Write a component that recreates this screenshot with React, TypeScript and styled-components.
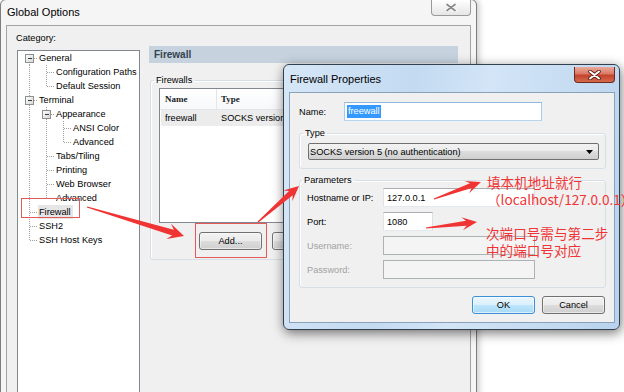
import React from 'react';
import styled, { createGlobalStyle } from 'styled-components';

const GlobalStyle = createGlobalStyle`
  html, body {
    margin: 0;
    padding: 0;
    background: #fff;
  }
  body {
    font-family: "Liberation Sans", Arial, sans-serif;
    font-size: 9.2px;
    color: #000;
  }
  * {
    box-sizing: border-box;
  }
`;

const RED = '#f03434';

const Desktop = styled.div`
  position: relative;
  width: 624px;
  height: 392px;
  overflow: hidden;
  background: #fff;
`;

/* ---------- Global Options window ---------- */

const OptionsWindow = styled.div`
  position: absolute;
  left: 0;
  top: -1px;
  width: 477px;
  height: 420px;
  display: flex;
  flex-direction: column;
  padding: 0 5px;
  background: #f5f5f5;
  border: 1px solid #7d7d7d;
  border-radius: 6px 6px 0 0;
  box-shadow: 2px 0 6px rgba(0, 0, 0, 0.22);
`;

const TitleBar = styled.div<{ $height: number }>`
  display: flex;
  align-items: flex-start;
  height: ${({ $height }) => $height}px;
  flex-shrink: 0;
`;

const WindowTitle = styled.div<{ $top: number }>`
  margin-top: ${({ $top }) => $top}px;
  padding-left: 1px;
  font-size: 11px;
  line-height: 12px;
  color: #000;
`;

const CloseButton = styled.div<{ $danger?: boolean }>`
  margin-left: auto;
  margin-top: ${({ $danger }) => ($danger ? 2 : 0)}px;
  width: ${({ $danger }) => ($danger ? 41 : 40)}px;
  height: 16px;
  display: flex;
  align-items: center;
  justify-content: center;
  border: 1px solid ${({ $danger }) => ($danger ? '#6d2a22' : '#9a9a9a')};
  border-top: none;
  border-radius: 0 0 4px 4px;
  background: ${({ $danger }) =>
    $danger
      ? 'linear-gradient(#e9a99b 0%, #dc7a66 45%, #c3442c 55%, #d36a4d 100%)'
      : 'linear-gradient(#ffffff 0%, #f2f2f2 50%, #e6e6e6 100%)'};
`;

const ClientArea = styled.div`
  flex: 1;
  display: flex;
  gap: 9px;
  padding: 6px 12px 0 10px;
  background: #f0f0f0;
  border: 1px solid #a3a3a3;
  border-bottom: none;
`;

const CategoryColumn = styled.div`
  width: 123px;
  display: flex;
  flex-direction: column;
`;

const CategoryLabel = styled.div`
  height: 18px;
  margin-left: -1px;
  line-height: 12px;
`;

const TreeBox = styled.div`
  flex: 1;
  padding: 0 0 0 3px;
  background: #fff;
  border: 1px solid #828790;
`;

const TreeRow = styled.div`
  display: flex;
  height: 14px;
  align-items: center;
  white-space: nowrap;
`;

const TreeLabel = styled.span<{ $selected?: boolean }>`
  padding: 0 2px 0 1px;
  line-height: 14px;
  background: ${({ $selected }) => ($selected ? '#e6e6e6' : 'transparent')};
`;

const PagePanel = styled.div`
  flex: 1;
  display: flex;
  flex-direction: column;
  padding-top: 14px;
`;

const PageHeader = styled.div`
  height: 17px;
  padding-left: 5px;
  background: #c6d2de;
  color: #33424f;
  font-size: 10px;
  font-weight: bold;
  line-height: 17px;
`;

const GroupBox = styled.fieldset<{ $pad: string; $margin: string }>`
  margin: ${({ $margin }) => $margin};
  padding: ${({ $pad }) => $pad};
  min-width: 0;
  border: 1px solid #d5dfe5;
  border-radius: 3px;
  box-shadow: inset 1px 1px 0 #fff;
`;

const GroupLegend = styled.legend`
  margin-left: -5px;
  padding: 0 2px;
  font-size: 9.2px;
  line-height: 12px;
`;

const ListBox = styled.div`
  height: 135px;
  background: #fff;
  border: 1px solid #828790;
  overflow: hidden;
`;

const ListHeader = styled.div`
  display: flex;
  height: 21px;
  border-bottom: 1px solid #e5e5e5;
  background: linear-gradient(#ffffff, #f7f8fa);
`;

const HeaderCell = styled.div<{ $width?: number }>`
  width: ${({ $width }) => ($width ? `${$width}px` : 'auto')};
  flex: ${({ $width }) => ($width ? 'none' : '1')};
  padding-left: ${({ $width }) => ($width ? 5 : 4)}px;
  border-right: ${({ $width }) => ($width ? '1px solid #e5e5e5' : 'none')};
  font-family: "Liberation Serif", "Times New Roman", serif;
  font-size: 9px;
  font-weight: bold;
  line-height: 20px;
  color: #222;
`;

const ListRow = styled.div<{ $selected?: boolean }>`
  display: flex;
  height: 16px;
  margin: 0 1px;
  line-height: 16px;
  background: ${({ $selected }) => ($selected ? '#ececec' : 'transparent')};
  white-space: nowrap;
`;

const ListCell = styled.div<{ $width?: number }>`
  width: ${({ $width }) => ($width ? `${$width}px` : 'auto')};
  padding-left: 4px;
`;

const ButtonRow = styled.div<{ $align: 'start' | 'end'; $top: number; $inset: number }>`
  display: flex;
  justify-content: ${({ $align }) => ($align === 'start' ? 'flex-start' : 'flex-end')};
  gap: ${({ $align }) => ($align === 'start' ? 10 : 7)}px;
  margin-top: ${({ $top }) => $top}px;
  padding-left: ${({ $align, $inset }) => ($align === 'start' ? $inset : 0)}px;
  padding-right: ${({ $align, $inset }) => ($align === 'end' ? $inset : 0)}px;
`;

const PushButton = styled.div<{ $default?: boolean }>`
  width: 63px;
  height: 18px;
  display: flex;
  align-items: center;
  justify-content: center;
  border: 1px solid ${({ $default }) => ($default ? '#3c8fd8' : '#707070')};
  border-radius: 3px;
  background: ${({ $default }) =>
    $default
      ? 'linear-gradient(#eaf6fd 0%, #d9f0fc 50%, #bee6fd 50%, #a7d9f5 100%)'
      : 'linear-gradient(#f2f2f2 0%, #ebebeb 50%, #dddddd 50%, #cfcfcf 100%)'};
  box-shadow: inset 0 0 0 1px ${({ $default }) => ($default ? 'rgba(255,255,255,0.6)' : 'rgba(255,255,255,0.5)')};
  font-size: 9.2px;
`;

/* ---------- Firewall Properties dialog ---------- */

const Dialog = styled.div`
  position: absolute;
  left: 283px;
  top: 64px;
  width: 337px;
  height: 266px;
  display: flex;
  flex-direction: column;
  padding: 0 4px 6px 5px;
  border: 1px solid #33414f;
  border-radius: 6px;
  background: linear-gradient(100deg, #d6e7f7 0%, #c3daf1 35%, #d3e5f7 55%, #b9d3ed 100%);
  box-shadow: 1px 3px 12px rgba(0, 0, 0, 0.55);
`;

const DialogClient = styled.div`
  flex: 1;
  display: flex;
  flex-direction: column;
  padding: 9px 8px 0 9px;
  background: #f0f0f0;
  border: 1px solid #8aa1ba;
`;

const FieldRow = styled.div<{ $labelWidth: number }>`
  display: grid;
  grid-template-columns: ${({ $labelWidth }) => $labelWidth}px auto;
  align-items: center;
  height: 19px;
  line-height: 12px;
`;

const FieldLabel = styled.span<{ $disabled?: boolean }>`
  color: ${({ $disabled }) => ($disabled ? '#a2a2a2' : '#000')};
  white-space: nowrap;
`;

const TextBox = styled.div<{ $width: number; $state?: 'focus' | 'disabled' }>`
  width: ${({ $width }) => $width}px;
  height: 19px;
  padding-left: ${({ $state }) => ($state === 'focus' ? 2 : 3)}px;
  display: flex;
  align-items: center;
  border: 1px solid;
  border-color: ${({ $state }) =>
    $state === 'focus'
      ? '#8fb7dd #a9cbe8 #b7d6ef #a9cbe8'
      : $state === 'disabled'
        ? '#adb2b5'
        : '#abadb3 #dbdfe6 #e3e9ef #e2e3ea'};
  background: ${({ $state }) => ($state === 'disabled' ? '#f4f4f4' : '#fff')};
  font-size: 9.2px;
`;

const SelectedText = styled.span`
  padding: 0 1px;
  background: #3399ff;
  color: #fff;
  line-height: 13px;
`;

const ComboBox = styled.div`
  height: 17px;
  display: flex;
  align-items: center;
  justify-content: space-between;
  padding: 0 5px 0 1px;
  border: 1px solid #707070;
  border-radius: 2px;
  background: linear-gradient(#f2f2f2 0%, #ebebeb 50%, #dddddd 50%, #cfcfcf 100%);
  font-size: 9.2px;
`;

const ParamList = styled.div`
  display: flex;
  flex-direction: column;
  gap: 5px;
`;

/* ---------- annotations ---------- */

const Markup = styled.svg`
  position: absolute;
  left: 0;
  top: 0;
  pointer-events: none;
`;

const Note = styled.div<{ $left: number; $top: number }>`
  position: absolute;
  left: ${({ $left }) => $left}px;
  top: ${({ $top }) => $top}px;
  color: ${RED};
  font-family: "Noto Sans CJK SC", sans-serif;
  font-size: 13.6px;
  line-height: 17px;
  white-space: nowrap;
`;

/* ---------- drawings ---------- */

type TreeItem = { label: string; depth: number; box?: boolean; selected?: boolean };

const treeItems: TreeItem[] = [
  { label: 'General', depth: 0, box: true },
  { label: 'Configuration Paths', depth: 1 },
  { label: 'Default Session', depth: 1 },
  { label: 'Terminal', depth: 0, box: true },
  { label: 'Appearance', depth: 1, box: true },
  { label: 'ANSI Color', depth: 2 },
  { label: 'Advanced', depth: 2 },
  { label: 'Tabs/Tiling', depth: 1 },
  { label: 'Printing', depth: 1 },
  { label: 'Web Browser', depth: 1 },
  { label: 'Advanced', depth: 1 },
  { label: 'Firewall', depth: 0, selected: true },
  { label: 'SSH2', depth: 0 },
  { label: 'SSH Host Keys', depth: 0 },
];

const continuesAt = (i: number, d: number) => {
  for (let j = i + 1; j < treeItems.length; j++) {
    if (treeItems[j].depth < d) return false;
    if (treeItems[j].depth === d) return true;
  }
  return false;
};

const DOT = { stroke: '#a0a0a0', strokeWidth: 1, strokeDasharray: '1 1', shapeRendering: 'crispEdges' as const };

const Guide = ({ on }: { on: boolean }) => (
  <svg width={17} height={14} style={{ flex: 'none' }}>
    {on && <line x1={8.5} y1={0} x2={8.5} y2={14} {...DOT} />}
  </svg>
);

const Connector = ({ first, last, box }: { first: boolean; last: boolean; box?: boolean }) => (
  <svg width={17} height={14} style={{ flex: 'none' }}>
    <defs>
      <linearGradient id="expander" x1="0" y1="0" x2="1" y2="1">
        <stop offset="0" stopColor="#ffffff" />
        <stop offset="1" stopColor="#d4d4d4" />
      </linearGradient>
    </defs>
    <line x1={8.5} y1={first ? 7 : 0} x2={8.5} y2={last ? 8 : 14} {...DOT} />
    <line x1={9} y1={7.5} x2={17} y2={7.5} {...DOT} />
    {box && (
      <>
        <rect x={4.5} y={3.5} width={8} height={8} fill="url(#expander)" stroke="#8e8f8f" />
        <line x1={6.5} y1={7.5} x2={10.5} y2={7.5} stroke="#3b3b3b" shapeRendering="crispEdges" />
      </>
    )}
  </svg>
);

const CrossGlyph = ({ danger }: { danger?: boolean }) =>
  danger ? (
    <svg width={13} height={10} viewBox="0 0 13 10">
      <path d="M2 1.5 L11 8.5 M11 1.5 L2 8.5" stroke="#5a1c14" strokeWidth={3.6} strokeLinecap="round" />
      <path d="M2 1.5 L11 8.5 M11 1.5 L2 8.5" stroke="#fff" strokeWidth={2} strokeLinecap="round" />
    </svg>
  ) : (
    <svg width={12} height={9} viewBox="0 0 12 9">
      <path d="M2 1.5 L10 7.5 M10 1.5 L2 7.5" stroke="#ffffff" strokeWidth={3.4} strokeLinecap="round" />
      <path d="M2 1.5 L10 7.5 M10 1.5 L2 7.5" stroke="#8a8a8a" strokeWidth={1.8} strokeLinecap="round" />
    </svg>
  );

const arrowPoints = (x1: number, y1: number, x2: number, y2: number, head: number, headW: number, bodyW: number) => {
  const L = Math.hypot(x2 - x1, y2 - y1);
  const ux = (x2 - x1) / L;
  const uy = (y2 - y1) / L;
  const nx = -uy;
  const ny = ux;
  const bx = x2 - ux * head;
  const by = y2 - uy * head;
  const kx = x2 - ux * head * 0.72;
  const ky = y2 - uy * head * 0.72;
  const pts = [
    [x1 + nx * 0.6, y1 + ny * 0.6],
    [kx + nx * bodyW, ky + ny * bodyW],
    [bx + nx * headW, by + ny * headW],
    [x2, y2],
    [bx - nx * headW, by - ny * headW],
    [kx - nx * bodyW, ky - ny * bodyW],
    [x1 - nx * 0.6, y1 - ny * 0.6],
  ];
  return pts.map(([x, y]) => `${x.toFixed(1)},${y.toFixed(1)}`).join(' ');
};

const arrows = [
  { from: [87, 207], to: [184, 236], head: 16, headW: 8, bodyW: 3 },
  { from: [258, 222], to: [299, 186], head: 15, headW: 7, bodyW: 2.8 },
  { from: [434, 199], to: [481, 182], head: 15, headW: 6.5, bodyW: 2.6 },
  { from: [426, 228], to: [477, 222], head: 15, headW: 6.5, bodyW: 2.6 },
];

export default function App() {
  return (
    <>
      <GlobalStyle />
      <Desktop>
        <OptionsWindow>
          <TitleBar $height={25}>
            <WindowTitle $top={6}>Global Options</WindowTitle>
            <CloseButton>
              <CrossGlyph />
            </CloseButton>
          </TitleBar>
          <ClientArea>
            <CategoryColumn>
              <CategoryLabel>Category:</CategoryLabel>
              <TreeBox>
                {treeItems.map((item, i) => (
                  <TreeRow key={i}>
                    {Array.from({ length: item.depth }, (_, d) => (
                      <Guide key={d} on={continuesAt(i, d)} />
                    ))}
                    <Connector first={i === 0} last={!continuesAt(i, item.depth)} box={item.box} />
                    <TreeLabel $selected={item.selected}>{item.label}</TreeLabel>
                  </TreeRow>
                ))}
              </TreeBox>
            </CategoryColumn>
            <PagePanel>
              <PageHeader>Firewall</PageHeader>
              <GroupBox $margin="11px 5px 0 1px" $pad="2px 8px 9px 8px">
                <GroupLegend>Firewalls</GroupLegend>
                <ListBox>
                  <ListHeader>
                    <HeaderCell $width={57}>Name</HeaderCell>
                    <HeaderCell>Type</HeaderCell>
                  </ListHeader>
                  <ListRow $selected>
                    <ListCell $width={56}>freewall</ListCell>
                    <ListCell>SOCKS version 5 (no authentication)</ListCell>
                  </ListRow>
                </ListBox>
                <ButtonRow $align="start" $top={9} $inset={40}>
                  <PushButton>Add...</PushButton>
                  <PushButton>Edit...</PushButton>
                  <PushButton>Remove...</PushButton>
                </ButtonRow>
              </GroupBox>
            </PagePanel>
          </ClientArea>
        </OptionsWindow>

        <Dialog>
          <TitleBar $height={27}>
            <WindowTitle $top={8}>Firewall Properties</WindowTitle>
            <CloseButton $danger>
              <CrossGlyph danger />
            </CloseButton>
          </TitleBar>
          <DialogClient>
            <FieldRow $labelWidth={45}>
              <FieldLabel>Name:</FieldLabel>
              <TextBox $width={198} $state="focus">
                <SelectedText>freewall</SelectedText>
              </TextBox>
            </FieldRow>
            <GroupBox $margin="6px 0 0 0" $pad="4px 6px 8px 8px">
              <GroupLegend>Type</GroupLegend>
              <ComboBox>
                <span>SOCKS version 5 (no authentication)</span>
                <svg width={7} height={4} viewBox="0 0 7 4">
                  <path d="M0 0 H7 L3.5 4 Z" fill="#000" />
                </svg>
              </ComboBox>
            </GroupBox>
            <GroupBox $margin="5px 0 0 0" $pad="2px 6px 8px 7px">
              <GroupLegend>Parameters</GroupLegend>
              <ParamList>
                <FieldRow $labelWidth={76}>
                  <FieldLabel>Hostname or IP:</FieldLabel>
                  <TextBox $width={152}>127.0.0.1</TextBox>
                </FieldRow>
                <FieldRow $labelWidth={76}>
                  <FieldLabel>Port:</FieldLabel>
                  <TextBox $width={50}>1080</TextBox>
                </FieldRow>
                <FieldRow $labelWidth={76}>
                  <FieldLabel $disabled>Username:</FieldLabel>
                  <TextBox $width={152} $state="disabled" />
                </FieldRow>
                <FieldRow $labelWidth={76}>
                  <FieldLabel $disabled>Password:</FieldLabel>
                  <TextBox $width={152} $state="disabled" />
                </FieldRow>
              </ParamList>
            </GroupBox>
            <ButtonRow $align="end" $top={8} $inset={1}>
              <PushButton $default>OK</PushButton>
              <PushButton>Cancel</PushButton>
            </ButtonRow>
          </DialogClient>
        </Dialog>

        <Markup width={624} height={392}>
          <rect x={21.5} y={198.5} width={58} height={19} fill="none" stroke="#e25a5a" />
          <rect x={195.5} y={223.5} width={71} height={34} fill="none" stroke="#e25a5a" />
          {arrows.map((a, i) => (
            <polygon
              key={i}
              points={arrowPoints(a.from[0], a.from[1], a.to[0], a.to[1], a.head, a.headW, a.bodyW)}
              fill={RED}
            />
          ))}
        </Markup>

        <Note $left={487} $top={174}>
          填本机地址就行
          <br />
          （localhost/127.0.0.1）
        </Note>
        <Note $left={486} $top={225}>
          次端口号需与第二步
          <br />
          中的端口号对应
        </Note>
      </Desktop>
    </>
  );
}
